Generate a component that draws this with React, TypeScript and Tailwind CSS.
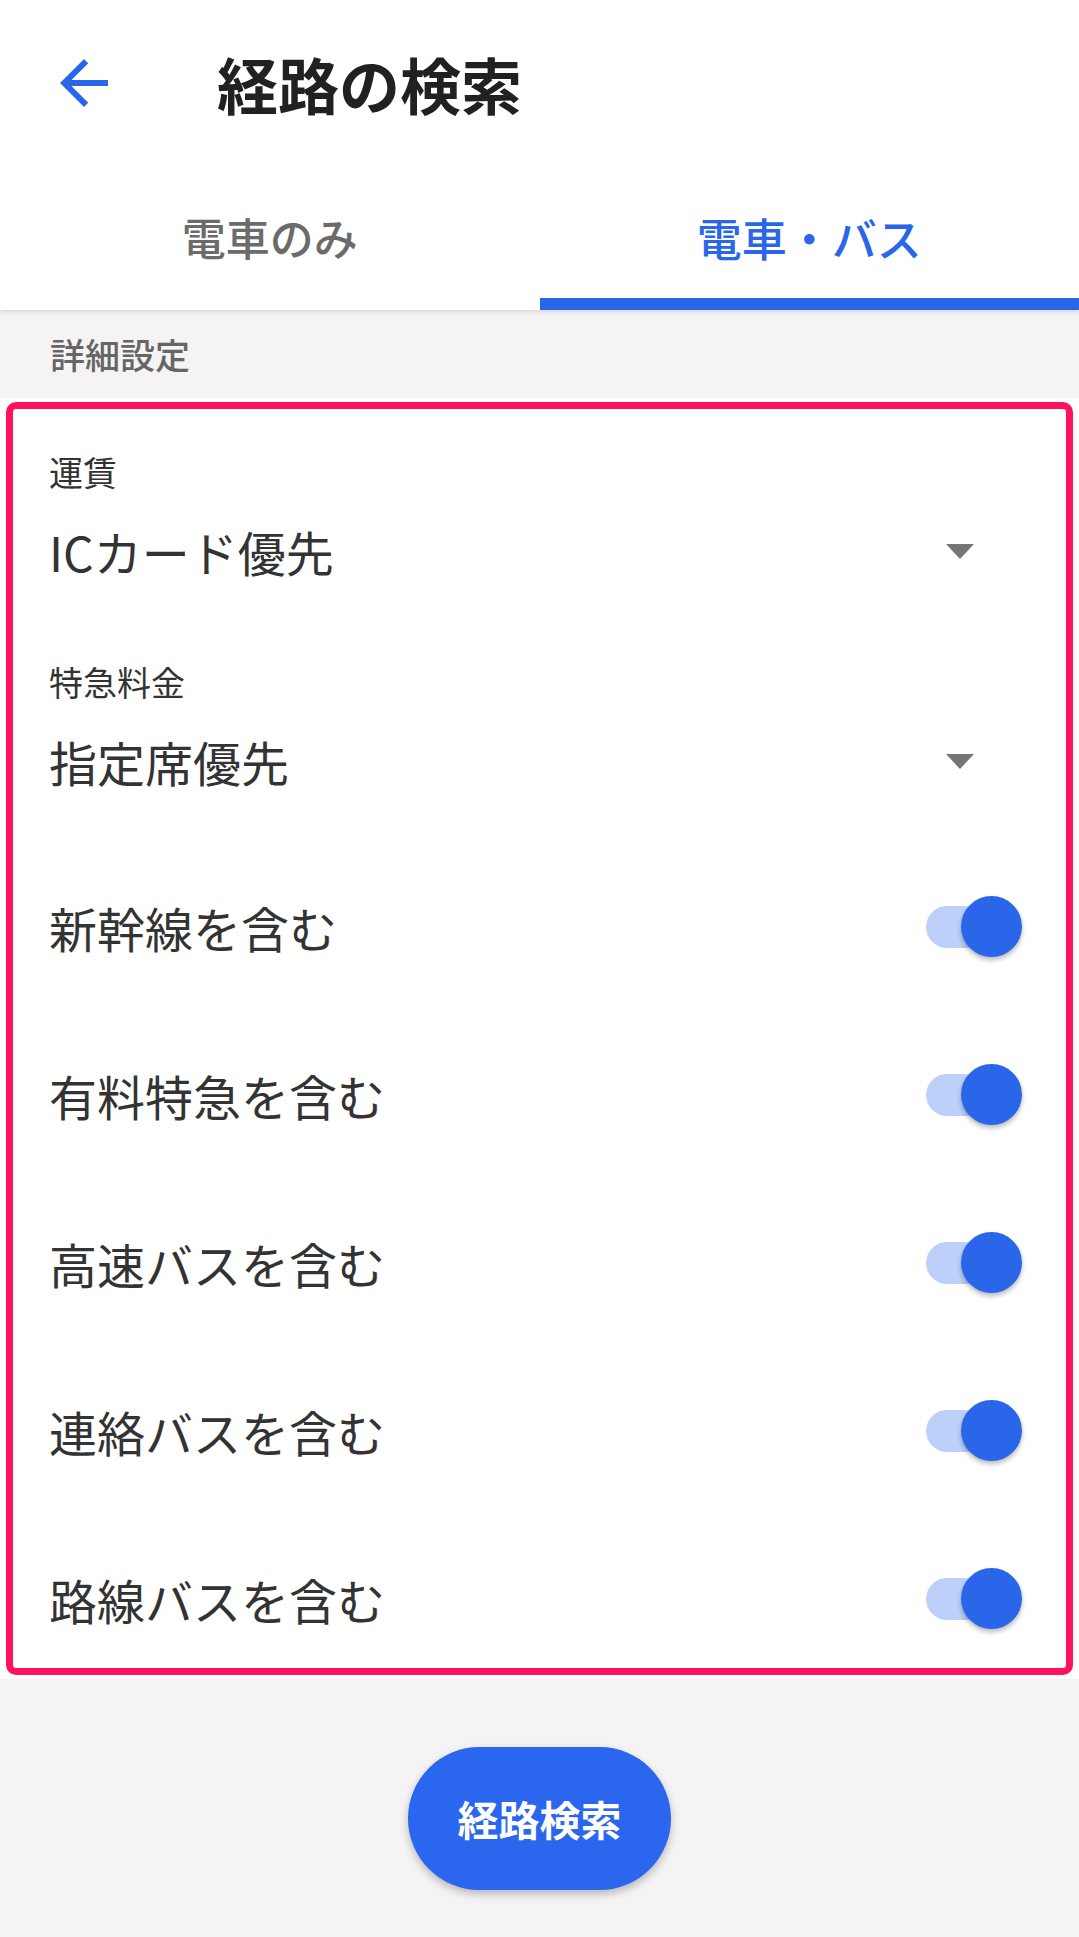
const FONT = "font-['Noto_Sans_CJK_JP','Noto_Sans',sans-serif]";

const TOGGLES = ["新幹線を含む", "有料特急を含む", "高速バスを含む", "連絡バスを含む", "路線バスを含む"];

function Toggle() {
  return (
    <div className="relative h-[62px] w-[96px]">
      <div className="absolute left-0 top-[10px] h-[42px] w-[84px] rounded-full bg-[#bcd0f9]" />
      <div className="absolute right-0 top-0 h-[61px] w-[61px] rounded-full bg-[#2a66ea] shadow-[0_3px_5px_rgba(0,0,0,0.28)]" />
    </div>
  );
}

function Caret() {
  return (
    <svg width="28" height="15" viewBox="0 0 28 15" className="mr-[92px]">
      <path d="M0 0h28L14 15z" fill="#757575" />
    </svg>
  );
}

export default function App() {
  return (
    <div className={`flex h-[1937px] w-[1079px] flex-col bg-[#f5f3f4] ${FONT}`}>
      {/* header + tabs */}
      <div className="relative z-10 bg-white shadow-[0_2px_5px_rgba(0,0,0,0.12)]">
        <div className="flex h-[166px] items-center">
          <svg width="72" height="72" viewBox="0 0 24 24" className="ml-[48px]">
            <path d="M20 11H7.83l5.59-5.59L12 4l-8 8 8 8 1.41-1.41L7.83 13H20v-2z" fill="#2a66ea" />
          </svg>
          <h1 className="ml-[97px] text-[61px] font-bold leading-none text-[#212121]">経路の検索</h1>
        </div>
        <div className="grid h-[144px] grid-cols-2">
          <div className="flex items-center justify-center pb-[2px] text-[44px] font-medium text-[#6b6b6b]">電車のみ</div>
          <div className="flex flex-col">
            <div className="flex flex-1 items-center justify-center pt-[12px] text-[45px] font-medium text-[#2a66ea]">電車・バス</div>
            <div className="h-[12px] bg-[#2a66ea]" />
          </div>
        </div>
      </div>

      <div className="flex h-[88px] items-center pl-[50px] text-[35px] font-medium text-[#666]">詳細設定</div>

      {/* settings card */}
      <div className="bg-white px-[6px] py-[4px]">
        <div className="flex flex-col rounded-[10px] border-[7px] border-[#ff1160] pb-px pl-[36px]">
          <div className="mt-[40px] flex h-[44px] items-center text-[34px] text-[#333]">運賃</div>
          <div className="mt-[18px] flex h-[80px] items-center justify-between text-[48px] text-[#333]">
            <span>ICカード優先</span>
            <Caret />
          </div>
          <div className="mt-[68px] flex h-[44px] items-center text-[34px] text-[#333]">特急料金</div>
          <div className="mt-[18px] flex h-[80px] items-center justify-between text-[48px] text-[#333]">
            <span>指定席優先</span>
            <Caret />
          </div>
          <div className="mt-[58px] flex flex-col gap-[32px]">
            {TOGGLES.map((t) => (
              <div key={t} className="flex h-[136px] items-center justify-between text-[48px] text-[#333]">
                <span>{t}</span>
                <div className="mr-[44px]">
                  <Toggle />
                </div>
              </div>
            ))}
          </div>
        </div>
      </div>

      <div className="flex justify-center pt-[68px]">
        <button className="flex h-[143px] w-[263px] items-center justify-center rounded-full bg-[#2a66ee] text-[41px] font-bold text-white shadow-[0_4px_8px_rgba(0,0,0,0.25)]">
          経路検索
        </button>
      </div>
    </div>
  );
}
